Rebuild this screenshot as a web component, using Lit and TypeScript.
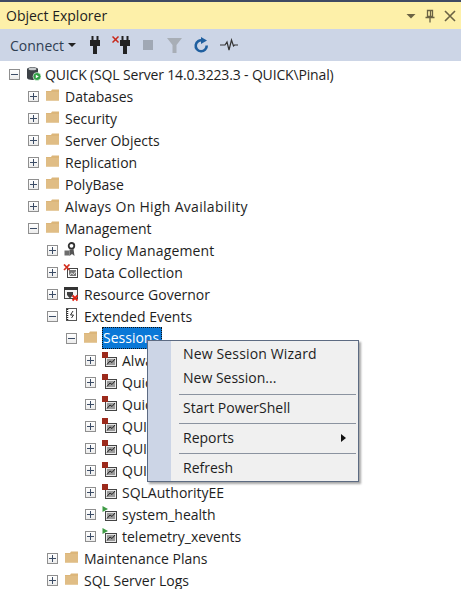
import { LitElement, css, html, svg } from "lit";
import { customElement } from "lit/decorators.js";

type Icon = "server" | "folder" | "policy" | "collect" | "governor" | "xe" | "stopped" | "running";
interface Row { label: string; level: number; icon: Icon; open?: boolean; selected?: boolean; track?: number; }

const rows: Row[] = [
  { label: "QUICK (SQL Server 14.0.3223.3 - QUICK\\Pinal)", level: 0, icon: "server", open: true, track: -0.16 },
  { label: "Databases", level: 1, icon: "folder" },
  { label: "Security", level: 1, icon: "folder" },
  { label: "Server Objects", level: 1, icon: "folder" },
  { label: "Replication", level: 1, icon: "folder" },
  { label: "PolyBase", level: 1, icon: "folder" },
  { label: "Always On High Availability", level: 1, icon: "folder", track: 0.3 },
  { label: "Management", level: 1, icon: "folder", open: true },
  { label: "Policy Management", level: 2, icon: "policy", track: 0.15 },
  { label: "Data Collection", level: 2, icon: "collect" },
  { label: "Resource Governor", level: 2, icon: "governor" },
  { label: "Extended Events", level: 2, icon: "xe", open: true },
  { label: "Sessions", level: 3, icon: "folder", open: true, selected: true },
  { label: "AlwaysOn_health", level: 4, icon: "stopped" },
  { label: "QuickSessionStandard", level: 4, icon: "stopped" },
  { label: "QuickSessionTSQL", level: 4, icon: "stopped" },
  { label: "QUICK_Session1", level: 4, icon: "stopped" },
  { label: "QUICK_Session2", level: 4, icon: "stopped" },
  { label: "QUICK_Session3", level: 4, icon: "stopped" },
  { label: "SQLAuthorityEE", level: 4, icon: "stopped" },
  { label: "system_health", level: 4, icon: "running" },
  { label: "telemetry_xevents", level: 4, icon: "running" },
  { label: "Maintenance Plans", level: 2, icon: "folder" },
  { label: "SQL Server Logs", level: 2, icon: "folder" },
];

const chart = svg`
  <rect x="4.500" y="5.500" width="11" height="9" fill="#e8e8e8" stroke="#444"/>
  <rect x="6" y="7" width="8" height="6" fill="#9a9a9a"/>
  <path d="M6 12.500l3-3.500 2 1.500 3-3.500" fill="none" stroke="#222"/>`;

const icons: Record<Icon, unknown> = {
  server: svg`
    <path d="M2 3C2 0.500 13 0.500 13 3V12C13 14.500 2 14.500 2 12Z" fill="#3d4247"/>
    <ellipse cx="7.500" cy="3" rx="4" ry="1.300" fill="#c9ccce"/>
    <circle cx="12" cy="10.500" r="4" fill="#2f9e44" stroke="#fff" stroke-width="0.600"/>
    <path d="M10.800 8.700l3 1.800-3 1.800z" fill="#fff"/>`,
  folder: svg`
    <path d="M2 3L7 3L8 1.500H15V12.500H2Z" fill="#dcb67a"/>
    <rect x="2" y="4" width="13" height="8.500" fill="#e0bd85"/>`,
  policy: svg`
    <circle cx="8.500" cy="3.800" r="2.800" fill="none" stroke="#333" stroke-width="1.800"/>
    <path d="M6.500 7.500L6.500 14L9 12L11.500 14L10.500 7" fill="#555"/>
    <rect x="1.500" y="8.500" width="5" height="5" fill="#6d6d6d"/>`,
  collect: svg`
    <rect x="4.500" y="4.500" width="10" height="9" fill="#fff" stroke="#444"/>
    <rect x="6" y="6" width="7" height="6" fill="#777"/>
    <path d="M6 12l2.500-3 2 1.500 2.500-3" fill="none" stroke="#eee"/>
    <path d="M1 0.500l5.500 5.500M6.500 0.500L1 6" stroke="#d32f1f" stroke-width="1.700"/>`,
  governor: svg`
    <rect x="1.500" y="1.500" width="13" height="11" fill="#f4f4f4" stroke="#444"/>
    <rect x="1" y="1" width="14" height="3" fill="#333"/>
    <path d="M4 6h6v3l-3 3.500L4 9z" fill="#3f3f3f"/>
    <path d="M9.500 9.500l5 5M14.500 9.500l-5 5" stroke="#e02010" stroke-width="1.800"/>`,
  xe: svg`
    <rect x="3.500" y="0.500" width="10" height="12" fill="#fff" stroke="#555"/>
    <path d="M4.500 1v11" stroke="#222" stroke-dasharray="1 1" stroke-width="1.500"/>
    <path d="M10 3L7.500 7h3L8.500 10" fill="none" stroke="#333"/>`,
  stopped: svg`
    ${chart}
    <rect x="1" y="0" width="6" height="6" fill="#9c2a1c"/>`,
  running: svg`
    ${chart}
    <path d="M1.500 0L7 3L1.500 6Z" fill="#3f9b45"/>`,
};

const menu = [
  { label: "New Session Wizard", height: 24, track: 0.15 },
  { label: "New Session...", height: 24 },
  { gap: 4 },
  { label: "Start PowerShell", height: 26 },
  { gap: 2 },
  { label: "Reports", height: 28, arrow: true },
  { gap: 1 },
  { label: "Refresh", height: 27 },
];

@customElement("app-root")
export class AppRoot extends LitElement {
  static styles = css`
    :host {
      display: block;
      position: relative;
      width: 461px;
      height: 589px;
      overflow: hidden;
      background: #fff;
      font-family: "Open Sans", "Noto Sans", sans-serif;
      font-size: 14px;
      color: #1e1e1e;
    }
    .title {
      display: flex;
      align-items: center;
      height: 27px;
      border-top: 2px solid #3f4a63;
      background: #fdf0a9;
      padding: 0 4px 0 6px;
    }
    .title span { flex: 1; }
    .title svg { display: block; margin-left: 7px; }
    .toolbar {
      display: flex;
      align-items: center;
      height: 32px;
      background: #ccd5e6;
      padding-left: 10px;
      color: #2f3e52;
    }
    .connect { display: flex; align-items: center; gap: 4px; width: 80px; }
    .caret { border: 4px solid transparent; border-top: 4px solid #222; border-bottom: 0; }
    .tools { display: flex; align-items: center; }
    .tools svg { display: block; }
    .plugx { margin-left: 12px; }
    .stop { margin-left: 13px; }
    .filter { margin-left: 14px; }
    .refresh { margin-left: 12px; }
    .pulse { margin-left: 11px; }
    .tree { padding-top: 2px; }
    .row { display: flex; align-items: center; height: 22px; white-space: nowrap; }
    .exp {
      box-sizing: border-box;
      width: 11px;
      height: 11px;
      border: 1px solid #8f8f8f;
      position: relative;
      margin: 0 5px 0 1px;
      flex: none;
      background: linear-gradient(#fff, #ececec);
    }
    .exp::before { content: ""; position: absolute; left: 1px; right: 1px; top: 4px; height: 1px; background: #3b4c66; }
    .exp.closed::after { content: ""; position: absolute; top: 1px; bottom: 1px; left: 4px; width: 1px; background: #3b4c66; }
    .ico { width: 16px; height: 16px; margin-right: 4px; flex: none; display: block; }
    .label { padding: 0 1px; }
    .root { margin-left: -1px; }
    .sel {
      background: #0a78d7;
      color: #fff;
      outline: 1px dotted #111;
      outline-offset: -1px;
      line-height: 22px;
      width: 58px;
      overflow: hidden;
    }
    .menu {
      position: absolute;
      left: 147px;
      top: 340px;
      box-sizing: border-box;
      width: 212px;
      height: 142px;
      border: 1px solid #5d6b82;
      box-shadow: 2px 2px 2px rgba(0, 0, 0, 0.35);
      background: linear-gradient(to right, #ccd5e6 23px, #f0f0f0 23px);
      padding: 1px 1px 0 0;
    }
    .item { display: flex; align-items: center; justify-content: space-between; padding: 0 11px 1px 35px; box-sizing: border-box; }
    .sep { height: 1px; background: #8b93a0; margin: 0 1px 0 31px; }
    .arrow { border: 4px solid transparent; border-left: 5px solid #111; border-right: 0; }
  `;

  renderRow(r: Row) {
    return html`
      <div class="row" style="padding-left:${8 + 19 * r.level}px">
        <div class="exp ${r.open ? "" : "closed"}"></div>
        <svg class="ico" viewBox="0 0 16 16">${icons[r.icon]}</svg>
        <span class="label ${r.selected ? "sel" : ""} ${r.level === 0 ? "root" : ""}" style="letter-spacing:${r.track ?? 0}px">${r.label}</span>
      </div>
    `;
  }

  render() {
    return html`
      <div class="title">
        <span>Object Explorer</span>
        <svg width="12" height="12" viewBox="0 0 12 12"><path d="M1.500 4h9L6 8.500z" fill="#6b6344"/></svg>
        <svg width="12" height="14" viewBox="0 0 12 14"><path d="M3.500 1.500h5v6h-5zM1.500 8.500h9M6 8.500V13.500M6.500 2v5" fill="none" stroke="#6b6344" stroke-width="1.300"/></svg>
        <svg width="14" height="14" viewBox="0 0 14 14"><path d="M2 2l10 10M12 2L2 12" stroke="#6b6344" stroke-width="1.600"/></svg>
      </div>
      <div class="toolbar">
        <div class="connect"><span>Connect</span><i class="caret"></i></div>
        <div class="tools">
          <svg width="10" height="18" viewBox="0 0 10 18"><path d="M1.500 0h2v4h3V0h2v4H10v6H7v8H3v-8H0V4h1.500z" fill="#222"/></svg>
          <svg class="plugx" width="18" height="18" viewBox="0 0 18 18"><path d="M9.500 0h2v4h3V0h2v4H18v6h-3v8h-4v-8H8V4h1.500z" fill="#222"/><path d="M0.500 0.500l6 6M6.500 0.500l-6 6" stroke="#c8281a" stroke-width="1.500"/></svg>
          <svg class="stop" width="10" height="10" viewBox="0 0 10 10"><rect width="10" height="10" fill="#a0a8b4"/></svg>
          <svg class="filter" width="15" height="15" viewBox="0 0 15 15"><path d="M0 0h15l-5.500 7v8h-4V7z" fill="#a8aeb6"/></svg>
          <svg class="refresh" width="15" height="16" viewBox="0 0 15 16"><path d="M12.700 8.500a5.500 5.500 0 1 1-4-5" fill="none" stroke="#1f5f9f" stroke-width="2.600"/><path d="M7 0l6 3.500L7 7z" fill="#1f5f9f"/></svg>
          <svg class="pulse" width="18" height="14" viewBox="0 0 18 14"><path d="M0 7h5l2-3 2 8 2.500-10 2 6 1-1h3.500" fill="none" stroke="#333" stroke-width="1.200"/></svg>
        </div>
      </div>
      <div class="tree">${rows.map((r) => this.renderRow(r))}</div>
      <div class="menu">
        ${menu.map((m) => m.gap
          ? html`<div class="sep" style="margin-top:${m.gap}px"></div>`
          : html`<div class="item" style="height:${m.height}px;letter-spacing:${m.track ?? 0}px"><span>${m.label}</span>${m.arrow ? html`<i class="arrow"></i>` : ""}</div>`)}
      </div>
    `;
  }
}
